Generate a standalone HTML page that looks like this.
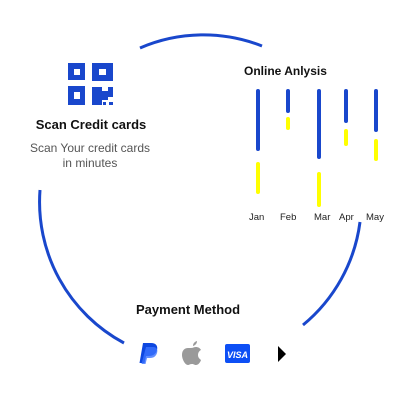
<!DOCTYPE html>
<html><head><style>
body{margin:0;width:400px;height:400px;background:#fff;position:relative;overflow:hidden;font-family:"Liberation Sans",Arial,sans-serif}
.t{position:absolute;white-space:nowrap}
</style></head><body>
<svg width="400" height="400" style="position:absolute;left:0;top:0">
<g fill="none" stroke="#1947cc" stroke-width="3">
<path d="M140,48 A160,160 0 0 1 262,46"/>
<path d="M40,190 A160,160 0 0 0 124,343"/>
<path d="M360,222 A160,160 0 0 1 303,325"/>
</g>
<g fill="#1947cc">
<rect x="68" y="63" width="17" height="17"/><rect x="92" y="63" width="21" height="18"/>
<rect x="68" y="86" width="17" height="19"/><rect x="92" y="87" width="10" height="18"/>
<rect x="102" y="91" width="6" height="9"/><rect x="108" y="87" width="5" height="10"/>
<rect x="103" y="102" width="3" height="3"/><rect x="109" y="102" width="4" height="3"/>
</g>
<g fill="#fff">
<rect x="74" y="69" width="6" height="6"/><rect x="99" y="69" width="7" height="6"/>
<rect x="74" y="92" width="6" height="7"/>
</g>
<g stroke-linecap="round" stroke-width="4">
<g stroke="#1947cc">
<line x1="258" y1="91" x2="258" y2="149"/><line x1="288" y1="91" x2="288" y2="111"/>
<line x1="319" y1="91" x2="319" y2="157"/><line x1="346" y1="91" x2="346" y2="121"/>
<line x1="376" y1="91" x2="376" y2="130"/>
</g>
<g stroke="#ffff00">
<line x1="258" y1="164" x2="258" y2="192"/><line x1="288" y1="119" x2="288" y2="128"/>
<line x1="319" y1="174" x2="319" y2="205"/><line x1="346" y1="131" x2="346" y2="144"/>
<line x1="376" y1="141" x2="376" y2="159"/>
</g>
</g>
<path d="M143,343 h8 c5,0 7,3 6,7 c-1,4 -4,6 -8,6 h-3 l-1.5,7 h-5 z" fill="#0d47e0"/>
<path d="M146,347 h7 c4,0 5,3 4,6 c-1,3 -3,5 -7,5 h-3 l-1.5,6 h-4 z" fill="#3b73ff" opacity=".8"/>
<path d="M191,348 c2,0 3,-1 5,-1 c2,0 4,1 5,3 c-2,1 -3,3 -3,5 c0,3 2,4 3,5 c-1,3 -3,5 -5,5 c-2,0 -2,-1 -4,-1 c-2,0 -3,1 -4,1 c-3,0 -6,-6 -6,-10 c0,-5 3,-7 6,-7 c1,0 2,0 3,0z M193,346 c0,-2 1,-4 4,-5 c0,2 -1,4 -4,5z" fill="#9a9a9a"/>
<rect x="225" y="344" width="25" height="19" rx="2" fill="#0d4ff5"/>
<text x="237.5" y="358" font-size="9" font-weight="bold" font-style="italic" fill="#fff" text-anchor="middle" font-family="Liberation Sans">VISA</text>
<path d="M278,346 L286,354 L278,362 z" fill="#000"/>
</svg>
<div class="t" style="left:0;width:182px;text-align:center;top:117px;font-size:13px;font-weight:bold;color:#111">Scan Credit cards</div>
<div class="t" style="left:0;width:180px;text-align:center;top:141px;font-size:12px;color:#555;line-height:15px">Scan Your credit cards<br>in minutes</div>
<div class="t" style="left:244px;top:64px;font-size:12px;font-weight:bold;color:#111">Online Anlysis</div>
<div class="t" style="left:249px;top:212px;font-size:9.5px;color:#222">Jan</div>
<div class="t" style="left:280px;top:212px;font-size:9.5px;color:#222">Feb</div>
<div class="t" style="left:314px;top:212px;font-size:9.5px;color:#222">Mar</div>
<div class="t" style="left:339px;top:212px;font-size:9.5px;color:#222">Apr</div>
<div class="t" style="left:366px;top:212px;font-size:9.5px;color:#222">May</div>
<div class="t" style="left:136px;top:302px;font-size:13px;font-weight:bold;color:#111">Payment Method</div>
</body></html>
